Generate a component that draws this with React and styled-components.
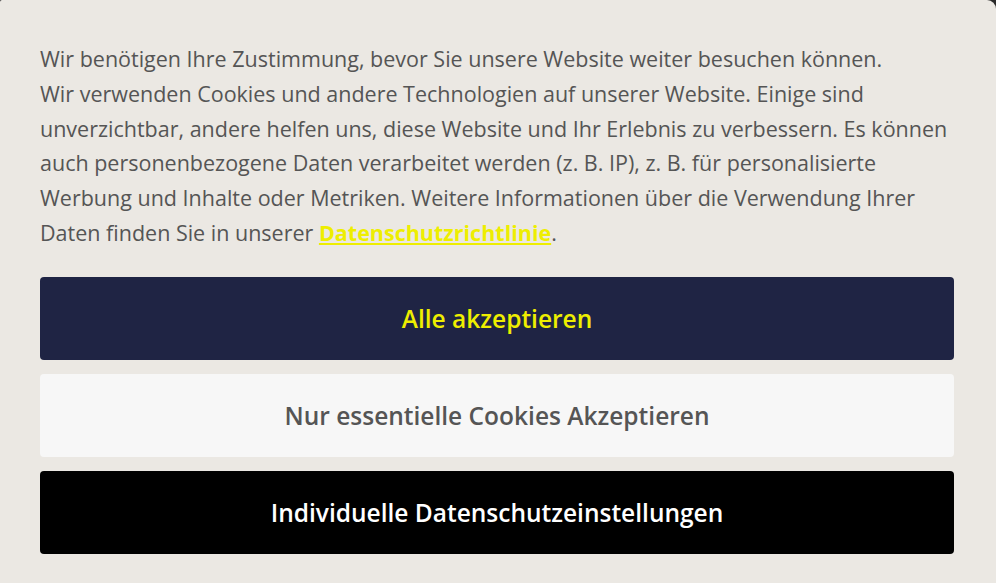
import React from 'react';
import styled, { createGlobalStyle } from 'styled-components';

const GlobalStyle = createGlobalStyle`
  html, body {
    margin: 0;
    padding: 0;
    background: #2b2b2b;
  }
`;

const Modal = styled.div`
  box-sizing: border-box;
  width: 996px;
  height: 583px;
  background: #ebe8e3;
  border-radius: 2px 9px 0 0;
  padding: 42px 42px 0 40px;
  font-family: 'Open Sans', 'Noto Sans', sans-serif;
`;

const Text = styled.p`
  margin: 0;
  font-size: 21.5px;
  line-height: 34.8px;
  color: #555555;
`;

const Link = styled.a`
  color: #eeee00;
  font-weight: 700;
  text-decoration: underline;
`;

const Buttons = styled.div`
  display: flex;
  flex-direction: column;
  gap: 14px;
  margin-top: 26px;
`;

const Button = styled.button`
  height: 83px;
  border: none;
  border-radius: 4px;
  font-family: inherit;
  font-size: 24.5px;
  font-weight: 600;
  cursor: pointer;
  background: ${(p) => p.$bg};
  color: ${(p) => p.$fg};
`;

const App = () => {
  return (
    <>
      <GlobalStyle />
      <Modal>
        <Text>
          Wir benötigen Ihre Zustimmung, bevor Sie unsere Website weiter besuchen können.
          <br />
          Wir verwenden Cookies und andere Technologien auf unserer Website. Einige sind
          unverzichtbar, andere helfen uns, diese Website und Ihr Erlebnis zu verbessern. Es können
          auch personenbezogene Daten verarbeitet werden (z. B. IP), z. B. für personalisierte
          Werbung und Inhalte oder Metriken. Weitere Informationen über die Verwendung Ihrer
          Daten finden Sie in unserer <Link href="#">Datenschutzrichtlinie</Link>.
        </Text>
        <Buttons>
          <Button $bg="#1f2444" $fg="#eeee00">Alle akzeptieren</Button>
          <Button $bg="#f7f7f7" $fg="#555555">Nur essentielle Cookies Akzeptieren</Button>
          <Button $bg="#000000" $fg="#ffffff">Individuelle Datenschutzeinstellungen</Button>
        </Buttons>
      </Modal>
    </>
  );
};

export default App;
